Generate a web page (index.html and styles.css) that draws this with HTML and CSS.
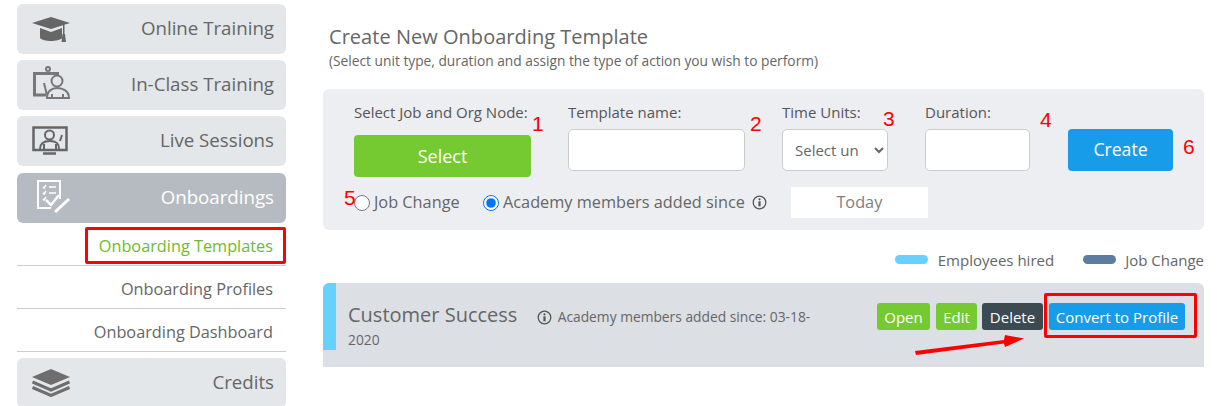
FILE: index.html
```html
<!DOCTYPE html>
<html lang="en">
<head>
<meta charset="utf-8">
<title>Create New Onboarding Template</title>
<link rel="stylesheet" href="styles.css">
</head>
<body>
<div class="page">
  <nav class="sidebar">
    <a class="nav-item">
      <svg class="nav-icon icon-cap" width="38" height="25" viewBox="0 0 38 25"><path fill="#666" d="M19 0 38 6 19 12 0 6Z"/><path fill="#666" d="M8 11 19 15 30 11V21C27 25 11 25 8 21Z"/><rect x="31" y="8" width="1.500" height="10" fill="#666"/><path fill="#666" d="M30.500 17h2.500l1 8h-4.500Z"/></svg>
      <span class="nav-label">Online Training</span>
    </a>
    <a class="nav-item">
      <svg class="nav-icon icon-board" width="38" height="33" viewBox="0 0 38 33" fill="none" stroke="#777" stroke-width="2"><circle cx="16" cy="3" r="2"/><path stroke-width="3" d="M27 7.500H2.500V29H14"/><path d="M12 17 15 29"/><circle cx="25" cy="15" r="5.500"/><path d="M15 32C15 25 20 22 25 22 31 22 37 25 37 32Z"/><path d="M20 32V28M31 32V28"/></svg>
      <span class="nav-label">In-Class Training</span>
    </a>
    <a class="nav-item">
      <svg class="nav-icon icon-monitor" width="36" height="29" viewBox="0 0 36 29" fill="none" stroke="#666" stroke-width="2.500"><path d="M1.500 1.500H34.500V24H1.500Z"/><path stroke-width="2" d="M8 23C8 17 12 15 18 15 24 15 27 17 27 23M28 15 30 9M12 18V23M24 18V23"/><circle cx="17.500" cy="9" r="4.500" stroke-width="2"/><path stroke-width="2.500" d="M11 27.500H24"/></svg>
      <span class="nav-label">Live Sessions</span>
    </a>
    <a class="nav-item is-active">
      <svg class="nav-icon icon-check" width="33" height="33" viewBox="0 0 33 33" fill="none" stroke="#fff" stroke-width="2"><path d="M23 19V1H1V28H14"/><path stroke-width="1.500" d="M6 7 7 8 9 5M12 7H19M6 13 7 14 9 11M12 13H19M6 19 7 20 9 17"/><path stroke-width="2.500" d="M9 20 14 25 22 15"/><path stroke-width="3" d="M32 19 18 32"/></svg>
      <span class="nav-label">Onboardings</span>
    </a>
    <ul class="subnav">
      <li class="subnav-item is-current">Onboarding Templates</li>
      <li class="subnav-item">Onboarding Profiles</li>
      <li class="subnav-item">Onboarding Dashboard</li>
    </ul>
    <a class="nav-item nav-item-last">
      <svg class="nav-icon icon-stack" width="38" height="28" viewBox="0 0 38 28"><path fill="#6e6e6e" d="M19 0 38 8 19 16 0 8Z"/><path fill="none" stroke="#6e6e6e" stroke-width="3" d="M0.500 13 19 21 37.500 13M0.500 18.500 19 26.500 37.500 18.500"/></svg>
      <span class="nav-label">Credits</span>
    </a>
  </nav>

  <main class="content">
    <header class="page-head">
      <h1>Create New Onboarding Template</h1>
      <p>(Select unit type, duration and assign the type of action you wish to perform)</p>
    </header>

    <section class="panel">
      <div class="fields">
        <div class="field field-node">
          <label>Select Job and Org Node:</label>
          <button class="btn-select">Select</button>
        </div>
        <div class="field field-name">
          <label>Template name:</label>
          <input class="text-input" type="text">
        </div>
        <div class="field field-unit">
          <label>Time Units:</label>
          <select class="select-input"><option>Select unit</option></select>
        </div>
        <div class="field field-duration">
          <label>Duration:</label>
          <input class="text-input" type="text">
        </div>
        <button class="btn-create">Create</button>
      </div>
      <div class="options">
        <label class="radio radio-job"><input type="radio" name="mode">Job Change</label>
        <label class="radio radio-academy"><input type="radio" name="mode" checked>Academy members added since</label>
        <svg class="info" width="15" height="15" viewBox="0 0 15 15"><circle cx="7.500" cy="7.500" r="6.300" fill="none" stroke="#555" stroke-width="1.300"/><circle cx="7.500" cy="4.300" r="1.100" fill="#555"/><rect x="6.400" y="6.300" width="2.200" height="5" fill="#555"/></svg>
        <div class="today">Today</div>
      </div>
    </section>

    <div class="legend">
      <span class="swatch swatch-hired"></span><span class="legend-text legend-hired">Employees hired</span>
      <span class="swatch swatch-job"></span><span class="legend-text">Job Change</span>
    </div>

    <article class="card">
      <div class="card-stripe"></div>
      <div class="card-text">
        <span class="card-title">Customer Success</span>
        <svg class="info info-card" width="15" height="15" viewBox="0 0 15 15"><circle cx="7.500" cy="7.500" r="6.300" fill="none" stroke="#555" stroke-width="1.300"/><circle cx="7.500" cy="4.300" r="1.100" fill="#555"/><rect x="6.400" y="6.300" width="2.200" height="5" fill="#555"/></svg>
        <span class="card-meta">Academy members added since: 03-18-2020</span>
      </div>
      <div class="card-actions">
        <button class="btn btn-green btn-open">Open</button>
        <button class="btn btn-green btn-edit">Edit</button>
        <button class="btn btn-dark">Delete</button>
        <button class="btn btn-blue">Convert to Profile</button>
      </div>
    </article>
  </main>
</div>

<div class="mark mark-box mark-box-nav"></div>
<div class="mark mark-box mark-box-convert"></div>
<span class="mark num num1">1</span>
<span class="mark num num2">2</span>
<span class="mark num num3">3</span>
<span class="mark num num4">4</span>
<span class="mark num num5">5</span>
<span class="mark num num6">6</span>
<svg class="mark mark-arrow" width="112" height="22" viewBox="0 0 112 22"><path fill="#f00" d="M1 17 90 6 91 1 110 4.500 91 13 90 9.500 2 21Z"/></svg>
</body>
</html>
```
FILE: styles.css
```css
* { box-sizing: border-box; }
html, body { margin: 0; padding: 0; }
body {
  width: 1218px;
  height: 406px;
  overflow: hidden;
  position: relative;
  background: #fff;
  font-family: "Open Sans", sans-serif;
  color: #666;
}
.page { display: flex; align-items: flex-start; padding-left: 17px; }

/* Sidebar */
.sidebar { width: 269px; padding-top: 4px; display: flex; flex-direction: column; flex: none; }
.nav-item {
  height: 50px;
  margin-bottom: 6px;
  background: #e4e7ea;
  border-radius: 6px;
  display: flex;
  align-items: center;
  justify-content: space-between;
  padding: 0 12px 0 15px;
  font-size: 18.7px;
  color: #666;
}
.nav-label { margin-bottom: 4px; }
.nav-item.is-active { background: #b6bbc2; color: #fff; margin-top: 1px; margin-bottom: 0; }
.nav-item-last { margin: 6px 0 0; }
.nav-icon { display: block; flex: none; align-self: flex-start; }
.icon-cap { margin-top: 13px; }
.icon-board { margin-top: 6px; }
.icon-monitor { margin-top: 10px; }
.icon-check { margin: 7px 0 0 5px; }
.icon-stack { margin-top: 11px; }
.subnav { list-style: none; margin: 0; padding: 0; }
.subnav-item {
  height: 43px;
  border-bottom: 1px solid #ccc;
  text-align: right;
  padding: 12px 13px 0 0;
  font-size: 16.300px;
  line-height: 22px;
  color: #666;
}
.subnav-item.is-current { color: #6fba2c; }

/* Main */
.content { margin-left: 37px; width: 881px; flex: none; }
.page-head { padding: 24px 0 0 6px; height: 89px; }
.page-head h1 { margin: 0; font-size: 20px; line-height: 26px; font-weight: 400; color: #666; letter-spacing: 0.03px; }
.page-head p { margin: 2px 0 0; font-size: 13.750px; line-height: 18px; color: #666; }

.panel { height: 141px; background: #edeef2; border-radius: 6px; padding: 13px 31px 0; }
.fields { display: flex; align-items: flex-start; gap: 37px; }
.field { display: flex; flex-direction: column; }
.field label { font-size: 15px; line-height: 20px; height: 27px; color: #555; white-space: nowrap; }
.field-node { width: 177px; }
.field-name { width: 177px; }
.field-unit { width: 106px; }
.field-duration { width: 105px; }
.btn-select {
  margin-top: 6px; height: 42px; border: 0; border-radius: 4px;
  background: #76ca31; color: #fff; font: 18px "Open Sans", sans-serif;
}
.text-input, .select-input {
  height: 42px; width: 100%;
  border: 1px solid #ccc; border-radius: 5px; background: #fff;
}
.select-input { font: 15px "Open Sans", sans-serif; color: #666; padding: 0 12px 0 8px; }
.btn-create {
  margin: 27px 0 0 1px; width: 105px; height: 42px; border: 0; border-radius: 4px; padding: 0 0 2px;
  background: #179cea; color: #fff; font: 17.600px "Open Sans", sans-serif;
}
.options { display: flex; align-items: center; height: 31px; margin-top: 10px; }
.radio { display: flex; align-items: center; font-size: 16.300px; color: #666; margin-bottom: 2px; }
.radio input { margin: 3px 4px 0 0; width: 16px; height: 16px; flex: none; }
.radio-job { width: 129px; }
.info { display: block; flex: none; }
.options .info { margin-left: 7px; }
.today {
  margin-left: 24px; width: 137px; height: 31px; background: #fff;
  text-align: center; font-size: 16.300px; line-height: 31px; color: #808080;
}

.legend { display: flex; align-items: center; justify-content: flex-end; height: 53px; padding-top: 6px; font-size: 15px; color: #666; }
.swatch { width: 33px; height: 9px; border-radius: 4.500px; margin-right: 10px; }
.swatch-hired { background: #66d0ff; }
.swatch-job { background: #5b7da1; margin-right: 9px; }
.legend-hired { margin-right: 29px; }

.card {
  position: relative;
  height: 84px;
  background: #dcdfe4;
  border-radius: 6px 6px 0 0;
  display: flex;
  align-items: flex-start;
  justify-content: space-between;
  padding: 20px 19px 0 25px;
}
.card-stripe {
  position: absolute; left: 0; top: 0; width: 13px; height: 67px;
  background: #66d0ff; border-top-left-radius: 6px;
}
.card-text { width: 470px; line-height: 22px; margin-top: 1px; }
.card-title { font-size: 20px; color: #666; }
.info-card { display: inline-block; vertical-align: -3px; margin: 0 2px 0 15px; }
.card-meta { font-size: 13.800px; color: #666; }
.card-actions { display: flex; gap: 6px; }
.btn { height: 27px; border: 0; border-radius: 3px; color: #fff; font: 15px "Open Sans", sans-serif; padding: 0; }
.btn-green { background: #76ca31; }
.btn-open { width: 53px; }
.btn-edit { width: 41px; }
.btn-dark { background: #3c4a52; width: 61px; margin-left: -1px; }
.btn-blue { background: #179cea; width: 136px; }

/* Annotations drawn over the screenshot */
.mark { position: absolute; }
.mark-box { border: 3px solid #f00; border-radius: 2px; }
.mark-box-nav { left: 85px; top: 227px; width: 201px; height: 37px; }
.mark-box-convert { left: 1044px; top: 293px; width: 153px; height: 45px; }
.num { font-family: "Liberation Sans", sans-serif; font-size: 21px; line-height: 24px; color: #f00; }
.num1 { left: 532px; top: 112px; }
.num2 { left: 750px; top: 112px; }
.num3 { left: 883px; top: 107px; }
.num4 { left: 1040px; top: 108px; }
.num5 { left: 344px; top: 186px; }
.num6 { left: 1183px; top: 135px; }
.mark-arrow { left: 914px; top: 334px; }
```
